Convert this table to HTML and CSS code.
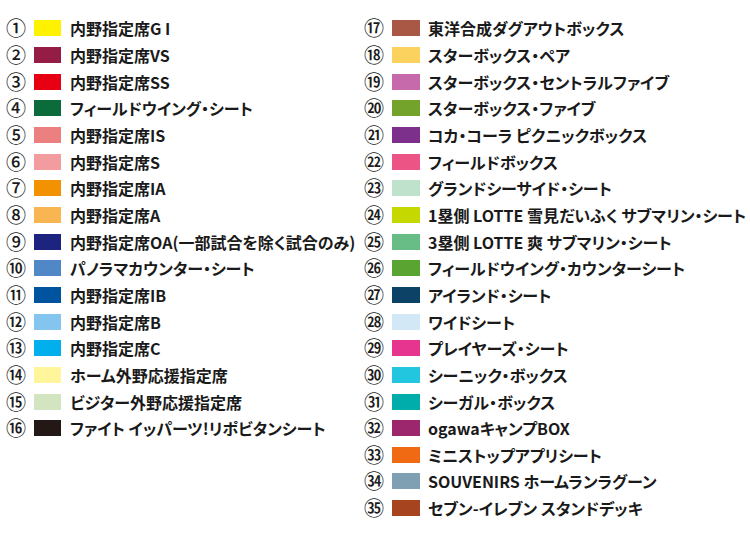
FILE: index.html
```html
<!DOCTYPE html>
<html lang="ja">
<head>
<meta charset="utf-8">
<title>座席凡例</title>
<link rel="stylesheet" href="styles.css">
</head>
<body>
<div class="legend">
  <ul class="col col-left">
    <li class="row"><span class="num">①</span><span class="sw c1"></span><span class="label">内野指定席G I</span></li>
    <li class="row"><span class="num">②</span><span class="sw c2"></span><span class="label">内野指定席VS</span></li>
    <li class="row"><span class="num">③</span><span class="sw c3"></span><span class="label">内野指定席SS</span></li>
    <li class="row"><span class="num">④</span><span class="sw c4"></span><span class="label">フィールドウイング・シート</span></li>
    <li class="row"><span class="num">⑤</span><span class="sw c5"></span><span class="label">内野指定席IS</span></li>
    <li class="row"><span class="num">⑥</span><span class="sw c6"></span><span class="label">内野指定席S</span></li>
    <li class="row"><span class="num">⑦</span><span class="sw c7"></span><span class="label">内野指定席IA</span></li>
    <li class="row"><span class="num">⑧</span><span class="sw c8"></span><span class="label">内野指定席A</span></li>
    <li class="row"><span class="num">⑨</span><span class="sw c9"></span><span class="label">内野指定席OA(一部試合を除く試合のみ)</span></li>
    <li class="row"><span class="num">⑩</span><span class="sw c10"></span><span class="label">パノラマカウンター・シート</span></li>
    <li class="row"><span class="num">⑪</span><span class="sw c11"></span><span class="label">内野指定席IB</span></li>
    <li class="row"><span class="num">⑫</span><span class="sw c12"></span><span class="label">内野指定席B</span></li>
    <li class="row"><span class="num">⑬</span><span class="sw c13"></span><span class="label">内野指定席C</span></li>
    <li class="row"><span class="num">⑭</span><span class="sw c14"></span><span class="label">ホーム外野応援指定席</span></li>
    <li class="row"><span class="num">⑮</span><span class="sw c15"></span><span class="label">ビジター外野応援指定席</span></li>
    <li class="row"><span class="num">⑯</span><span class="sw c16"></span><span class="label">ファイト イッパーツ!リポビタンシート</span></li>
  </ul>
  <ul class="col col-right">
    <li class="row"><span class="num">⑰</span><span class="sw c17"></span><span class="label">東洋合成ダグアウトボックス</span></li>
    <li class="row"><span class="num">⑱</span><span class="sw c18"></span><span class="label">スターボックス・ペア</span></li>
    <li class="row"><span class="num">⑲</span><span class="sw c19"></span><span class="label">スターボックス・セントラルファイブ</span></li>
    <li class="row"><span class="num">⑳</span><span class="sw c20"></span><span class="label">スターボックス・ファイブ</span></li>
    <li class="row"><span class="num">㉑</span><span class="sw c21"></span><span class="label">コカ・コーラ ピクニックボックス</span></li>
    <li class="row"><span class="num">㉒</span><span class="sw c22"></span><span class="label">フィールドボックス</span></li>
    <li class="row"><span class="num">㉓</span><span class="sw c23"></span><span class="label">グランドシーサイド・シート</span></li>
    <li class="row"><span class="num">㉔</span><span class="sw c24"></span><span class="label">1塁側 LOTTE 雪見だいふく サブマリン・シート</span></li>
    <li class="row"><span class="num">㉕</span><span class="sw c25"></span><span class="label">3塁側 LOTTE 爽 サブマリン・シート</span></li>
    <li class="row"><span class="num">㉖</span><span class="sw c26"></span><span class="label">フィールドウイング・カウンターシート</span></li>
    <li class="row"><span class="num">㉗</span><span class="sw c27"></span><span class="label">アイランド・シート</span></li>
    <li class="row"><span class="num">㉘</span><span class="sw c28"></span><span class="label">ワイドシート</span></li>
    <li class="row"><span class="num">㉙</span><span class="sw c29"></span><span class="label">プレイヤーズ・シート</span></li>
    <li class="row"><span class="num">㉚</span><span class="sw c30"></span><span class="label">シーニック・ボックス</span></li>
    <li class="row"><span class="num">㉛</span><span class="sw c31"></span><span class="label">シーガル・ボックス</span></li>
    <li class="row"><span class="num">㉜</span><span class="sw c32"></span><span class="label">ogawaキャンプBOX</span></li>
    <li class="row"><span class="num">㉝</span><span class="sw c33"></span><span class="label">ミニストップアプリシート</span></li>
    <li class="row"><span class="num">㉞</span><span class="sw c34"></span><span class="label">SOUVENIRS ホームランラグーン</span></li>
    <li class="row"><span class="num">㉟</span><span class="sw c35"></span><span class="label">セブン-イレブン スタンドデッキ</span></li>
  </ul>
</div>
</body>
</html>
```
FILE: styles.css
```css
html, body {
  margin: 0;
  padding: 0;
  background: #ffffff;
}

body {
  width: 750px;
  height: 540px;
  overflow: hidden;
  font-family: "Noto Sans CJK JP", "Noto Sans", sans-serif;
  color: #1a1a1a;
}

.legend {
  display: flex;
  padding: 15px 0 0 6px;
}

.col {
  list-style: none;
  margin: 0;
  padding: 0;
  display: flex;
  flex-direction: column;
}

.col-left {
  width: 358px;
}

.col-right {
  flex: 1;
}

.row {
  display: flex;
  align-items: center;
  height: 26.67px;
  white-space: nowrap;
}

.num {
  flex: none;
  width: 28px;
  font-size: 20px;
  line-height: 1;
  font-weight: 500;
  color: #1a1a1a;
}

.sw {
  flex: none;
  width: 27px;
  height: 16px;
  margin-right: 9px;
}

.col-right .sw {
  width: 28px;
  margin-right: 8px;
}

.label {
  font-size: 16px;
  font-weight: 700;
  line-height: 1;
  font-feature-settings: "palt";
  letter-spacing: 0;
}

.c1 { background: #fff200; }
.c2 { background: #951d45; }
.c3 { background: #e60012; }
.c4 { background: #0b6b3a; }
.c5 { background: #ec8080; }
.c6 { background: #f29c9f; }
.c7 { background: #f39200; }
.c8 { background: #f8b551; }
.c9 { background: #1d2480; }
.c10 { background: #4f87c7; }
.c11 { background: #00539f; }
.c12 { background: #83c5ee; }
.c13 { background: #00afec; }
.c14 { background: #fff59a; }
.c15 { background: #d2e5c0; }
.c16 { background: #231815; }
.c17 { background: #a85844; }
.c18 { background: #fcd25e; }
.c19 { background: #c66aac; }
.c20 { background: #73a32b; }
.c21 { background: #7d2f8c; }
.c22 { background: #eb5484; }
.c23 { background: #bfe2cc; }
.c24 { background: #c5d800; }
.c25 { background: #68bd86; }
.c26 { background: #5aa532; }
.c27 { background: #0b4266; }
.c28 { background: #d2e8f7; }
.c29 { background: #e6358e; }
.c30 { background: #22c7df; }
.c31 { background: #00adab; }
.c32 { background: #9c276d; }
.c33 { background: #f06a13; }
.c34 { background: #7f9fb3; }
.c35 { background: #a5441e; }
```
